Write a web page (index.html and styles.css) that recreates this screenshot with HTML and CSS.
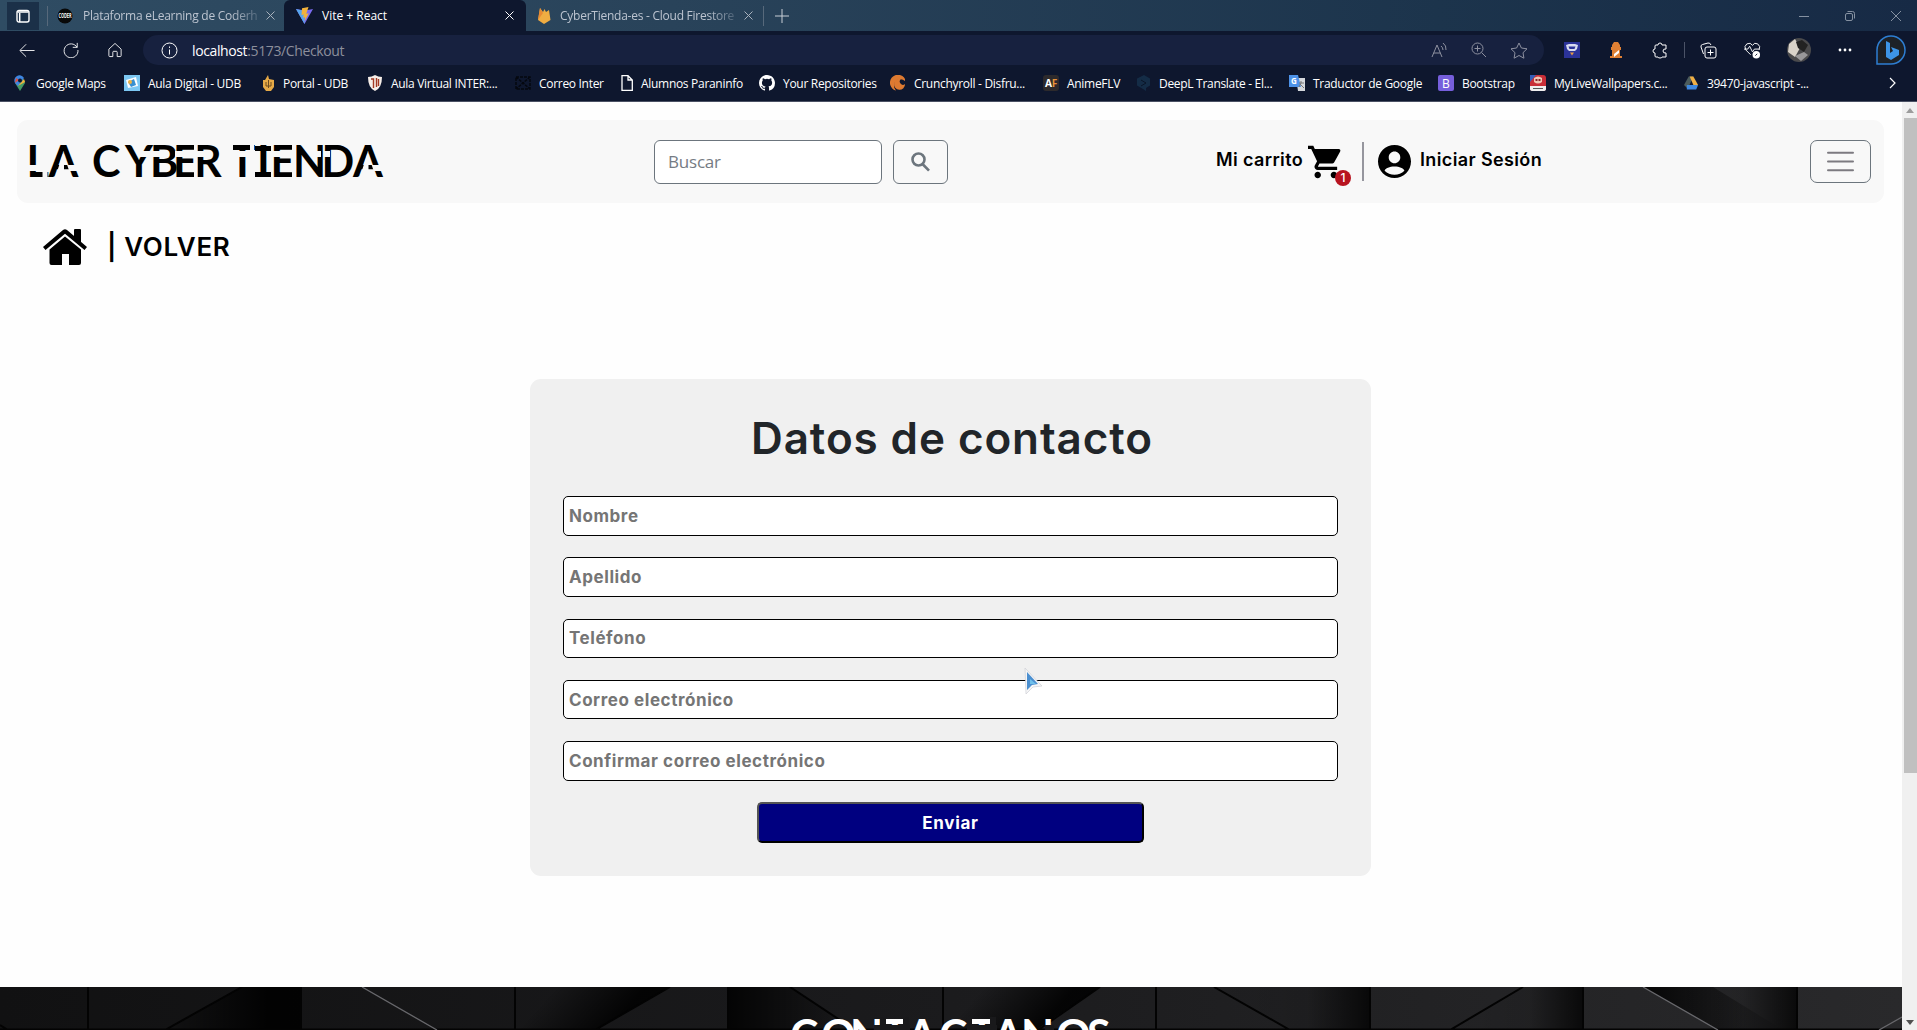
FILE: index.html
```html
<!DOCTYPE html>
<html lang="es">
<head>
<meta charset="utf-8">
<title>Vite + React</title>
<link rel="stylesheet" href="styles.css">
</head>
<body>
<div class="browser">
  <div class="tabs">
    <div class="tab-actions"><svg width="14" height="14" viewBox="0 0 14 14"><rect x="1" y="1.500" width="12" height="11.500" rx="2" fill="none" stroke="#fff" stroke-width="1.400"/><path d="M1.500 3h11M3.700 4v9" stroke="#fff" stroke-width="1.500"/></svg></div>
    <div class="tab tab-one">
      <svg width="16" height="16" viewBox="0 0 17 17"><circle cx="8.500" cy="8.500" r="8" fill="#080808"/><text x="1.500" y="11" font-size="7" font-weight="700" fill="#eee" textLength="14" lengthAdjust="spacingAndGlyphs">CODER</text></svg>
      <span class="tab-title fade">Plataforma eLearning de Coderh</span>
      <svg class="close" width="9" height="9" viewBox="0 0 9 9"><path d="M.5.5l8 8M8.500.5l-8 8"/></svg>
    </div>
    <div class="tab tab-active">
      <svg width="17" height="17" viewBox="0 0 17 17"><path d="M0 2l8.500 15L17 2 9 3.500z" fill="#7b6cf0"/><path d="M0 2l8.500 15V4z" fill="#57a5ee"/><path d="M12.500 0L6 1.300 5.500 8l2.300-.5-.7 3.300 2-.6-.5 4 4.200-8-2.500.5z" fill="#f2b23c"/></svg>
      <span class="tab-title">Vite + React</span>
      <svg class="close" width="9" height="9" viewBox="0 0 9 9"><path d="M.5.5l8 8M8.500.5l-8 8"/></svg>
    </div>
    <div class="tab tab-three">
      <svg width="14" height="17" viewBox="0 0 14 17"><path d="M1 13L3 1l3 4 1.500-3L9 5l3-2 1.500 10L7 17z" fill="#f0ad42"/><path d="M1 13L3 1l3 5z" fill="#e88a34"/></svg>
      <span class="tab-title fade">CyberTienda-es - Cloud Firestore</span>
      <svg class="close" width="9" height="9" viewBox="0 0 9 9"><path d="M.5.5l8 8M8.500.5l-8 8"/></svg>
    </div>
    <svg class="newtab" width="14" height="14" viewBox="0 0 14 14"><path d="M7 0v14M0 7h14"/></svg>
    <div class="winctl">
      <svg width="10" height="10" viewBox="0 0 10 10"><path d="M0 5.500h10"/></svg>
      <svg width="10" height="10" viewBox="0 0 10 10"><rect x=".5" y="2.500" width="7" height="7" rx="1.500"/><path d="M2.500.5h5q2 0 2 2v5"/></svg>
      <svg width="10" height="10" viewBox="0 0 10 10"><path d="M0 0l10 10M10 0L0 10"/></svg>
    </div>
  </div>

  <div class="toolbar">
    <div class="cell"><svg width="16" height="15" viewBox="0 0 18 16"><path d="M17.500 8H1.500M8 1L1 8l7 7"/></svg></div>
    <div class="cell"><svg width="16" height="16" viewBox="0 0 18 18"><path d="M15.800 6A7.800 7.800 0 1 0 16.800 9M16 1v5h-5"/></svg></div>
    <div class="cell"><svg width="14" height="16" viewBox="0 0 16 17"><path d="M1 7.500L8 1l7 6.500V15q0 1-1 1h-3.500v-5q0-1-1-1h-3q-1 0-1 1v5H2q-1 0-1-1z"/></svg></div>
    <div class="address">
      <svg width="17" height="17" viewBox="0 0 17 17"><circle cx="8.500" cy="8.500" r="7.500"/><path d="M8.500 7.500v5M8.500 4.500v1.400"/></svg>
      <span class="url"><b>localhost</b>:5173/Checkout</span>
      <div class="address-tools">
        <svg width="17" height="16" viewBox="0 0 17 16"><path d="M1 15L6 3l5 12M2.700 11h6.600M10 4q2 1.500 2 4M12 1q3.500 2.500 3 7"/></svg>
        <svg width="16" height="16" viewBox="0 0 16 16"><circle cx="6.500" cy="6.500" r="5.500"/><path d="M10.500 10.500L15 15M3.500 6.500h6M6.500 3.500v6"/></svg>
        <svg width="18" height="17" viewBox="0 0 18 17"><path d="M9 1l2.400 5 5.600.8-4 3.900.9 5.500L9 13.500l-4.900 2.700.9-5.500-4-3.900L6.600 6z"/></svg>
      </div>
    </div>
    <div class="cell ext"><svg width="16" height="16" viewBox="0 0 16 16"><g stroke="none"><rect width="16" height="16" fill="#2b3399"/><path d="M2 3l3-1h6l3 1-1 4-2 2H5L3 7z" fill="#d9dcf0"/><path d="M4.500 4.500h7l-1 2.500h-5z" fill="#2b3399"/><path d="M6 10.500h4l-2 3z" fill="#e99b44"/></g></svg></div>
    <div class="cell"><svg width="12" height="16" viewBox="0 0 12 16"><g stroke="none"><path d="M4 0h4l2 3v2h1v3h-1v6h2v2H0v-2h2V8H1V5h1V3z" fill="#df8034"/><path d="M4 12l5-4v3l-5 4z" fill="#fff"/></g></svg></div>
    <div class="cell"><svg width="16" height="17" viewBox="0 0 16 17"><path d="M4 3h2q0-2 2-2t2 2h4v4q-3-.5-3 2t3 2v4h-4q0 1-2 1t-2-1H4q-1 0-1-1v-3q-2 0-2-2t2-2V4q0-1 1-1z"/></svg></div>
    <i class="bar"></i>
    <div class="cell"><svg width="17" height="17" viewBox="0 0 17 17"><rect x="5" y="5" width="11" height="11" rx="2"/><path d="M10.500 7.500v6M7.500 10.500h6M3.500 12L1 5q-.5-2 1.500-2.500L8 1q2-.5 3 2"/></svg></div>
    <div class="cell"><svg width="17" height="17" viewBox="0 0 18 17"><path d="M7 13L2 8q-2.500-4 1-6.500Q7-.5 9 3q2-3.500 5.500-1.500Q18 4 16 8M0 7h4l2-3 3 6 2-3h5"/><circle cx="13" cy="13" r="4" fill="#fff" stroke="none"/><path d="M12 14l2-2" stroke="#0e172e"/></svg></div>
    <div class="cell avatar"><svg width="24" height="24" viewBox="0 0 24 24"><g stroke="none"><circle cx="12" cy="12" r="12" fill="#4a4a4c"/><path d="M2 6l6-5 5 9-5 9-7-5z" fill="#d9d3ca"/><path d="M9 4l6-2 6 5-4 7-6-4z" fill="#222"/><path d="M8 18l9-4 4 3-7 6z" fill="#99989a"/></g></svg></div>
    <div class="cell wide"><svg width="14" height="4" viewBox="0 0 14 4"><g stroke="none" fill="#fff"><circle cx="2" cy="2" r="1.400"/><circle cx="7" cy="2" r="1.400"/><circle cx="12" cy="2" r="1.400"/></g></svg></div>
    <div class="cell wide"><svg width="30" height="30" viewBox="0 0 30 30"><path d="M1 29V15A14 14 0 1 1 15 29z" fill="#1d2127" stroke="#2e7ed2" stroke-width="1.500"/><path d="M10 6l4 2v10l3-2-2-4 8 3v5l-8 5-5-3z" fill="#3d95e8" stroke="none"/></svg></div>
  </div>

  <div class="bookmarks">
    <div><svg width="16" height="16" viewBox="0 0 16 16"><path d="M8 16L3 8a5 5 0 1 1 10 0z" fill="#459a66"/><path d="M3 8a5 5 0 0 1 9-5L6 11z" fill="#3e86e0"/><path d="M6 11l6-7 1 3z" fill="#edb23d"/><path d="M4 3l3 2-4 3z" fill="#dc5040"/><circle cx="8" cy="5.500" r="2" fill="#0e172e"/></svg><span>Google Maps</span></div>
    <div><svg width="16" height="16" viewBox="0 0 16 16"><rect width="16" height="16" fill="#7cc7f2"/><path d="M2 5l10-3 2 9-10 2z" fill="#fff"/><path d="M4 7l6-3 2 6-5 2z" fill="#398fd0"/><circle cx="6" cy="7" r="2" fill="#f0b142"/></svg><span>Aula Digital - UDB</span></div>
    <div><svg width="13" height="16" viewBox="0 0 13 16"><path d="M1 5h2l3-5 1 4 5 1v7l-3 4H4l-3-4z" fill="#e5a947"/><path d="M4 7v4h5V7M6.500 5v8" stroke="#6c4c21" fill="none"/></svg><span>Portal - UDB</span></div>
    <div><svg width="16" height="16" viewBox="0 0 16 16"><path d="M1 2q4 0 7-2 3 2 7 2 0 11-7 14Q1 13 1 2z" fill="#f6eee8"/><path d="M4 4h2.500v9M9.500 3v9M11.500 4v7" stroke="#a43a24" stroke-width="1.400" fill="none"/></svg><span>Aula Virtual INTER:...</span></div>
    <div><svg width="16" height="14" viewBox="0 0 16 14"><path d="M1 1h14v12H1zL15 13M15 1L1 13" fill="none" stroke="#05080f" stroke-width="1.500" stroke-dasharray="3 1"/></svg><span>Correo Inter</span></div>
    <div><svg width="12" height="16" viewBox="0 0 12 16"><path d="M1 .7h6L11.300 5v10.300H1zM7 .7V5h4.300" fill="none" stroke="#fff" stroke-width="1.300"/></svg><span>Alumnos Paraninfo</span></div>
    <div><svg width="16" height="16" viewBox="0 0 16 16"><path fill="#fff" d="M8 0C3.580 0 0 3.580 0 8c0 3.540 2.290 6.530 5.470 7.590.4.070.55-.17.550-.38v-1.490c-2.010.37-2.530-.49-2.690-.94-.09-.23-.48-.94-.82-1.130-.28-.15-.68-.52-.01-.53.630-.01 1.080.58 1.230.82.720 1.210 1.870.87 2.330.66.070-.52.280-.87.510-1.070-1.780-.2-3.640-.89-3.640-3.950 0-.87.310-1.590.82-2.150-.08-.2-.36-1.020.08-2.120 0 0 .67-.21 2.200.82a7.400 7.400 0 0 1 4 0c1.530-1.040 2.200-.82 2.200-.82.440 1.100.160 1.920.08 2.120.51.560.82 1.270.82 2.150 0 3.070-1.870 3.750-3.650 3.950.29.250.54.730.54 1.480v2.200c0 .21.150.46.550.38A8 8 0 0 0 16 8c0-4.420-3.580-8-8-8z"/></svg><span>Your Repositories</span></div>
    <div><svg width="16" height="16" viewBox="0 0 16 16"><path d="M15 4A8 8 0 1 0 6 15.500 6.500 6.500 0 1 1 15 6z" fill="#dd7a31"/><path d="M15 9a5.500 5.500 0 1 1-4-5 2.500 2.500 0 1 0 4 5z" fill="#dd7a31"/></svg><span>Crunchyroll - Disfru...</span></div>
    <div><svg width="16" height="16" viewBox="0 0 16 16"><rect width="16" height="16" rx="3" fill="#2d2a2c"/><text x="2" y="12" font-size="10" font-weight="700" fill="#fff" textLength="12" lengthAdjust="spacingAndGlyphs">A<tspan fill="#e89339">F</tspan></text></svg><span>AnimeFLV</span></div>
    <div><svg width="14" height="16" viewBox="0 0 14 16"><path d="M7 0l6 3.500v7L9 13v3l-3-2-6-3.500v-7z" fill="#142c46"/><path d="M4 5l5 3-5 3" fill="none" stroke="#0a1528"/></svg><span>DeepL Translate - El...</span></div>
    <div><svg width="16" height="16" viewBox="0 0 16 16"><path d="M7 3h9v13H9z" fill="#d5d8dc"/><path d="M0 0h9l3 12H0z" fill="#4d92e8"/><text x="2" y="9" font-size="8" font-weight="700" fill="#fff">G</text><path d="M10 8h5M12 6v2l-2 4M11 9l4 4" stroke="#777" fill="none"/></svg><span>Traductor de Google</span></div>
    <div><svg width="16" height="16" viewBox="0 0 16 16"><rect width="16" height="16" rx="2" fill="#765fdc"/><text x="4" y="12.500" font-size="12" fill="#fff">B</text></svg><span>Bootstrap</span></div>
    <div><svg width="16" height="16" viewBox="0 0 16 16"><rect width="16" height="16" rx="3" fill="#c92e37"/><path d="M0 0h6L0 7z" fill="#345eb8"/><path d="M4 3q4-3 8 0v4q-4 3-8 0z" fill="#f0c6b4"/><path d="M5.500 4h2v2h-2zM8.500 4h2v2h-2z" fill="#8a242b"/><path d="M0 11h16v3q0 2-3 2H3q-3 0-3-2z" fill="#eee"/><path d="M3 13.500h10" stroke="#555"/></svg><span>MyLiveWallpapers.c...</span></div>
    <div><svg width="15" height="14" viewBox="0 0 16 14"><path d="M5 0h5L4 13 0 9z" fill="#4c5c5c"/><path d="M6 0h4l5 9h-5z" fill="#efaf45"/><path d="M3 9h12l-2 5H3z" fill="#3e88df"/></svg><span>39470-javascript -...</span></div>
    <svg class="more" width="7" height="12" viewBox="0 0 7 12"><path d="M1 1l5 5-5 5" fill="none" stroke="#fff" stroke-width="1.200"/></svg>
  </div>
</div>

<div class="viewport">
  <div class="page">
    <nav class="nav">
      <svg class="brand" width="356" height="35" viewBox="0 0 356 35">
        <text class="stencil" y="33" x="-1.500 20.500 50 64 97 122 145 166 195 201.500 229 242.500 265 293.500 325">LA CYBER TIENDA</text>
        <g class="cuts">
          <path d="M0 21h9v6H0zM14.500 27h5v7h-5zM35.200 9L26.800 34.500h16.900zM36 21h16l2 6H36zM112 7h20v6h-22zM147 7h20v6h-20zM168 7h9v6h-9zM166 1h3.500v33H166zM200 0h5v8h-5zM222 0h4v8h-4zM205 7h17v6h-17zM244 7h20v6h-20zM264 1h4v33h-4zM286 7h7v6h-7zM296 7h6v6h-6zM339.700 9l-8.400 25.500h16.900zM340.500 21h16l2 6h-18z"/>
        </g>
        <path d="M227 2h16v5h-16zM227 28h16v5h-16z"/>
      </svg>
      <form class="search"><input type="text" placeholder="Buscar" aria-label="Buscar"><button type="button" aria-label="Buscar"><svg width="19" height="20" viewBox="0 0 19 20"><circle cx="7.500" cy="7.500" r="6"/><path d="M11.500 12l6.500 6.700"/></svg></button></form>
      <div class="account">
        <a class="label cart-label">Mi carrito</a>
        <span class="cart"><svg width="34" height="34" viewBox="1 2 21 20"><path d="M7 18c-1.100 0-1.990.9-1.990 2S5.900 22 7 22s2-.9 2-2-.9-2-2-2zM1 2v2h2l3.600 7.590-1.350 2.450c-.16.280-.25.610-.25.960 0 1.100.9 2 2 2h12v-2H7.420c-.14 0-.25-.11-.25-.25l.03-.12.900-1.630h7.450c.75 0 1.410-.41 1.750-1.030l3.580-6.490A1 1 0 0 0 20 4H5.210l-.94-2H1zm16 16c-1.100 0-1.990.9-1.990 2s.89 2 1.990 2 2-.9 2-2-.9-2-2-2z"/></svg><i class="badge">1</i></span>
        <i class="divider"></i>
        <svg class="user" width="33" height="33" viewBox="2 2 20 20"><path d="M12 2C6.480 2 2 6.480 2 12s4.480 10 10 10 10-4.480 10-10S17.520 2 12 2zm0 4c1.930 0 3.500 1.570 3.500 3.500S13.930 13 12 13s-3.500-1.570-3.500-3.500S10.070 6 12 6zm0 14c-2.300 0-4.400-.9-6-2.400.5-1.600 3-2.600 6-2.600s5.500 1 6 2.600C16.400 19.100 14.300 20 12 20z"/></svg>
        <a class="label">Iniciar Sesión</a>
      </div>
      <button type="button" class="toggler" aria-label="Menú"><svg width="27" height="21" viewBox="0 0 27 21"><path d="M1 1.700h25M1 10.500h25M1 19.300h25"/></svg></button>
    </nav>

    <a class="back">
      <svg width="44" height="36" viewBox="0 0 44 36"><path d="M31 8V1q0-1 1-1h5q1 0 1 1v13zM0 18L20 1q2-1.500 4 0l20 17-2.500 3L22 4.800 2.500 21z"/><path d="M6.500 20.500L22 7.500l16 13V34q0 2-2 2H26V25h-7v11H8.500q-2 0-2-2z"/></svg>
      <span>| VOLVER</span>
    </a>

    <form class="card">
      <h1>Datos de contacto</h1>
      <input type="text" placeholder="Nombre" aria-label="Nombre">
      <input type="text" placeholder="Apellido" aria-label="Apellido">
      <input type="text" placeholder="Teléfono" aria-label="Teléfono">
      <input type="text" placeholder="Correo electrónico" aria-label="Correo electrónico">
      <input type="text" placeholder="Confirmar correo electrónico" aria-label="Confirmar correo electrónico">
      <button type="button">Enviar</button>
    </form>

    <footer class="footer">
      <svg width="1902" height="43" viewBox="0 0 1902 43">
        <defs>
          <linearGradient id="base"><stop offset="0" stop-color="#111112"/><stop offset=".5" stop-color="#1b1b1d"/><stop offset="1" stop-color="#29292b"/></linearGradient>
          <linearGradient id="right"><stop offset="0" stop-color="#000" stop-opacity=".1"/><stop offset=".75" stop-color="#000" stop-opacity=".9"/></linearGradient>
          <linearGradient id="soft"><stop offset="0" stop-color="#000" stop-opacity="0"/><stop offset=".6" stop-color="#000" stop-opacity=".1"/><stop offset="1" stop-color="#000" stop-opacity=".75"/></linearGradient>
          <linearGradient id="diag" x1="0" y1="0" x2="1" y2=".25"><stop offset=".25" stop-color="#000" stop-opacity="0"/><stop offset=".8" stop-color="#000" stop-opacity=".85"/></linearGradient>
          <linearGradient id="left"><stop offset="0" stop-color="#000" stop-opacity=".85"/><stop offset="1" stop-color="#000" stop-opacity="0"/></linearGradient>
        </defs>
        <path fill="url(#base)" d="M0 0h1902v43H0z"/>
        <path fill="url(#right)" d="M242 0h59v43H165z"/>
        <path fill="url(#diag)" d="M515 0h155l-75 43h-80z"/>
        <path fill="url(#diag)" d="M943 0h157l-64 43h-93z"/>
        <path fill="url(#left)" d="M728 0h62l65 43H728z"/>
        <path fill="url(#left)" d="M1643 0h70l70 43h-65z"/>
        <path fill="url(#soft)" d="M1214 0h156v43h-80z"/>
        <path fill="url(#soft)" d="M1523 0h60v43h-133z"/>
        <path fill="url(#soft)" d="M1660 0h137v43h-79z"/>
        <path fill="none" stroke="#030303" stroke-width="2" d="M88 0v43M301 0v43M515 0v43M728 0v43M943 0v43M1156 0v43M1370 0v43M1583 0v43M1797 0v43M242 0l-77 43M670 0l-75 43M790 0l65 43M1100 0l-62 43M1214 0l76 43M1523 0l-73 43M0 38l8 5M0 42.500h1902"/>
        <path fill="none" stroke="#68686c" stroke-width="1.300" d="M362 0l75 43M1643 0l75 43M1879 43l23-13"/>
        <text class="stencil" y="64" x="790 821 850 882 907 939 969 993 1021 1056 1087">CONTACTANOS</text>
        <path fill="#19191b" d="M880 38h30v5h-30zM967 38h30v5h-30zM874 38h9v5h-9zM1045 38h9v5h-9zM880 30h6v9h-6zM903 30h6v9h-6zM967 30h5v9h-5zM990 30h6v9h-6z"/>
      </svg>
    </footer>
  </div>
  <div class="scrollbar"><i class="up"></i><i class="thumb"></i><i class="down"></i></div>
</div>
<svg class="cursor" width="20" height="28" viewBox="0 0 20 28"><path d="M1 1l17 18-9 1-7 7z" fill="#f5f5f6" stroke="#cfd0d6" stroke-width=".7"/><path d="M3 5l11 12-6 1-5 5z" fill="#4b8fd0"/><path d="M6 12l6 5H6z" fill="#6fc0ea"/></svg>
</body>
</html>
```
FILE: styles.css
```css
* { box-sizing: border-box; }

body {
  margin: 0;
  height: 1030px;
  display: flex;
  flex-direction: column;
  overflow: hidden;
  background: #fefefe;
  font-family: "Open Sans", sans-serif;
}

svg { display: block; flex: none; }

/* Browser chrome */
.browser { flex: none; height: 102px; background: #0e172e; border-bottom: 1px solid #4a5164; }

.tabs {
  display: flex;
  align-items: center;
  height: 31px;
  background: linear-gradient(90deg, #2f4c63 0%, #29435a 35%, #1c344c 75%, #172a45 100%);
}
.tab-actions {
  display: grid;
  place-items: center;
  width: 32px;
  height: 28px;
  margin: 1px 8px 0 7px;
  background: #1b3048;
}
.tab { display: flex; align-items: center; height: 31px; }
.tab-one { width: 237px; padding-left: 9px; border-left: 1px solid #57697b; height: 20px; }
.tab-active { width: 242px; padding-left: 12px; background: #0e172e; border-radius: 6px 6px 0 0; }
.tab-three { width: 238px; height: 20px; padding-left: 11px; border-right: 1px solid #57697b; }
.tab-title { flex: 1; margin-left: 9px; font-size: 12px; line-height: 18px; color: #fff; white-space: nowrap; }
.tab-one .tab-title { margin-left: 10px; }
.fade {
  letter-spacing: -.25px;
  color: #bcc4d0;
  -webkit-mask-image: linear-gradient(90deg, #000 148px, rgba(0, 0, 0, .2) 176px);
  mask-image: linear-gradient(90deg, #000 148px, rgba(0, 0, 0, .2) 176px);
}
.close { margin-right: 12px; fill: none; stroke: #a9b2bd; }
.tab-one .close { margin-right: 9px; }
.tab-three .close { margin-right: 10px; }
.tab-active .close { stroke: #fff; }
.newtab { margin-left: 11px; stroke: #c9cfd6; }
.winctl { display: flex; gap: 36px; margin: 0 16px 0 auto; fill: none; stroke: #8591a1; }

.toolbar { display: flex; align-items: center; height: 38px; padding-left: 5px; fill: none; stroke: #fff; }
.cell { display: flex; justify-content: center; width: 44px; }
.wide { width: 46px; }
.avatar { width: 46px; margin-left: 2px; }
.ext { margin-left: 6px; }
.bar { width: 1px; height: 16px; margin: 0 1px 0 2px; background: #4b5367; }
.address {
  display: flex;
  align-items: center;
  width: 1401px;
  height: 30px;
  margin-left: 6px;
  padding: 0 16px 0 18px;
  border-radius: 15px;
  background: #17213f;
}
.url { margin-left: 14px; font-size: 14px; letter-spacing: -.38px; color: #8d8f9c; }
.url b { font-weight: 400; color: #fff; }
.address-tools { display: flex; gap: 23px; margin-left: auto; stroke: #8e91a0; }

.bookmarks {
  display: grid;
  grid-template-columns: 112px 138px 105px 148px 106px 138px 131px 153px 94px 152px 149px 92px 154px 205px 7px;
  align-items: center;
  height: 28px;
  padding-left: 12px;
  font-size: 12px;
  letter-spacing: -.3px;
  color: #fff;
}
.bookmarks div { display: flex; align-items: center; gap: 8px; white-space: nowrap; }

/* Document area */
.viewport { flex: 1; min-height: 0; display: flex; }
.page { width: 1902px; display: flex; flex-direction: column; overflow: hidden; }

.scrollbar {
  width: 15px;
  display: flex;
  flex-direction: column;
  align-items: center;
  background: #f0f0f0;
}
.up, .down { border: 4px solid transparent; }
.up { margin: 2px 0 5px; border-bottom-color: #9c9c9c; border-bottom-width: 5px; }
.thumb { width: 13px; height: 655px; margin-left: 2px; background: #c0c0c0; }
.down { margin: auto 0 1px; border-top-color: #505050; border-top-width: 5px; }

.nav {
  flex: none;
  display: flex;
  align-items: center;
  width: 1867px;
  height: 83px;
  margin: 18px 0 0 17px;
  padding-left: 11px;
  border-radius: 11px;
  background: #f8f8f8;
}
.brand { overflow: visible; }
.stencil { font-family: Lato, sans-serif; font-size: 43px; font-weight: 700; }
.cuts { fill: #f8f8f8; }

.search { display: flex; gap: 11px; margin-left: 270px; }
.search input {
  width: 228px;
  height: 44px;
  padding: 0 13px;
  border: 1px solid #6c757d;
  border-radius: 6px;
  background: #fff;
  font: 17px "Open Sans", sans-serif;
}
.search input::placeholder { color: #757b83; letter-spacing: -.2px; }
.search button {
  display: grid;
  place-items: center;
  width: 55px;
  height: 44px;
  padding: 0;
  border: 1px solid #6c757d;
  border-radius: 6px;
  background: none;
}
.search svg { fill: none; stroke: #6c757d; stroke-width: 2.6; }

.account { display: flex; align-items: center; margin-left: 268px; }
.label {
  position: relative;
  top: -2px;
  width: 122px;
  font: 600 18px/24px Inter, sans-serif;
  letter-spacing: .37px;
  white-space: nowrap;
  color: #000;
}
.cart-label { width: 92px; }
.cart { position: relative; }
.badge {
  position: absolute;
  left: 27px;
  top: 25px;
  width: 16px;
  height: 16px;
  border-radius: 50%;
  background: #b81420;
  color: #fff;
  font: 500 12px/16px Inter, sans-serif;
  text-align: center;
}
.divider { width: 2px; height: 39px; margin: 0 14px 0 20px; background: #96969e; }
.user { margin-right: 9px; }
.toggler {
  display: grid;
  place-items: center;
  width: 61px;
  height: 43px;
  margin: 0 13px 0 auto;
  padding: 0;
  border: 1px solid #6c757d;
  border-radius: 7px;
  background: none;
}
.toggler svg { fill: none; stroke: #7c7a80; stroke-width: 2; stroke-linecap: round; }

.back { display: flex; align-items: center; gap: 20px; height: 36px; margin: 26px 0 0 43px; }
.back span { font: 600 26px/36px Inter, sans-serif; letter-spacing: .65px; }

.card {
  flex: none;
  display: flex;
  flex-direction: column;
  align-items: center;
  width: 841px;
  height: 497px;
  margin: 114px 0 0 530px;
  padding-top: 33px;
  border-radius: 11px;
  background: #f0f0f0;
}
.card h1 {
  margin: 0 0 31px;
  padding-left: 3px;
  font: 600 44px/53px Inter, sans-serif;
  letter-spacing: .9px;
  color: #212529;
}
.card input {
  width: 775px;
  height: 39.5px;
  margin-bottom: 21.8px;
  padding: 0 5px;
  border: 1px solid #000;
  border-radius: 5px;
  background: #fff;
  font: 700 17px Inter, sans-serif;
  letter-spacing: .56px;
}
.card input::placeholder { color: #757575; }
.card button {
  width: 387px;
  height: 41px;
  border: 2px outset #000;
  border-radius: 5px;
  background: #000080;
  color: #fff;
  font: 700 17px Inter, sans-serif;
  letter-spacing: .7px;
}

.footer { flex: none; height: 43px; margin-top: 111px; overflow: hidden; }
.footer .stencil { fill: #fff; }

.cursor { position: absolute; left: 1024px; top: 667px; }
```
